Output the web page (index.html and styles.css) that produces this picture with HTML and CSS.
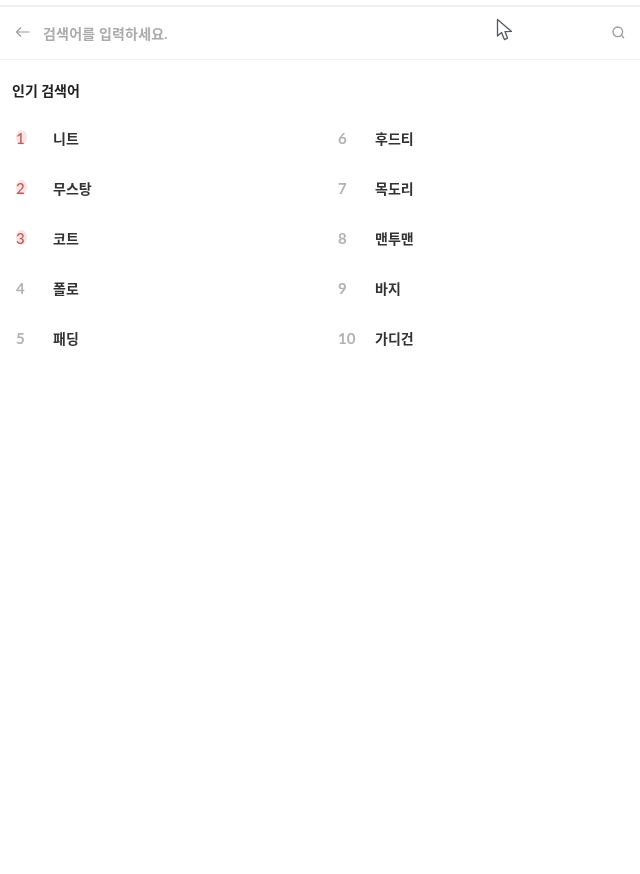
FILE: index.html
```html
<!DOCTYPE html>
<html lang="ko">
<head>
<meta charset="utf-8">
<title>검색</title>
<link rel="stylesheet" href="styles.css">
</head>
<body>
<div class="page">
  <header class="search-bar">
    <svg class="icon-back" width="16" height="12" viewBox="0 0 16 12" fill="none" stroke="#9a9a9a" stroke-width="1.2"><path d="M14.5 6H1.5M6 1.5L1.5 6L6 10.5"/></svg>
    <span class="placeholder">검색어를 입력하세요.</span>
    <svg class="icon-search" width="15" height="15" viewBox="0 0 15 15" fill="none" stroke="#9a9a9a" stroke-width="1.3"><circle cx="6.8" cy="6.8" r="4.8"/><path d="M10.3 10.3L13 13"/></svg>
  </header>
  <svg class="cursor" width="18" height="24" viewBox="0 0 18 24" fill="#fff" stroke="#55585e" stroke-width="1.3" stroke-linejoin="round"><path d="M1.5 1.5V18L5.6 14.6L8.4 21.6L11.6 20.2L9 13.6L15.5 13.4Z"/></svg>
  <h2 class="title">인기 검색어</h2>
  <ol class="ranks">
    <li class="rank top"><span class="num">1</span><span class="word">니트</span></li>
    <li class="rank"><span class="num">6</span><span class="word">후드티</span></li>
    <li class="rank top"><span class="num">2</span><span class="word">무스탕</span></li>
    <li class="rank"><span class="num">7</span><span class="word">목도리</span></li>
    <li class="rank top"><span class="num">3</span><span class="word">코트</span></li>
    <li class="rank"><span class="num">8</span><span class="word">맨투맨</span></li>
    <li class="rank"><span class="num">4</span><span class="word">폴로</span></li>
    <li class="rank"><span class="num">9</span><span class="word">바지</span></li>
    <li class="rank"><span class="num">5</span><span class="word">패딩</span></li>
    <li class="rank"><span class="num">10</span><span class="word">가디건</span></li>
  </ol>
</div>
</body>
</html>
```
FILE: styles.css
```css
* { box-sizing: border-box; }
html, body { margin: 0; padding: 0; background: #fff; }
body { font-family: Lato, "Noto Sans CJK KR", sans-serif; }
.page {
  position: relative;
  width: 640px;
  height: 874px;
  padding-top: 5px;
  overflow: hidden;
  filter: blur(0.5px);
}
.search-bar {
  display: flex;
  align-items: center;
  height: 55px;
  padding: 0 14px 0 15px;
  border-top: 2px solid #f0f0f0;
  border-bottom: 1px solid #f2f2f2;
}
.icon-back { flex: none; margin-right: 12px; margin-top: -2px; }
.placeholder { flex: 1; font-size: 14px; font-weight: 700; color: #ababab; letter-spacing: 0.2px; }
.icon-search { flex: none; margin-top: -1px; }
.cursor { position: absolute; left: 496px; top: 18px; }
.title {
  margin: 0;
  padding: 21px 12px 0;
  font-size: 14px;
  line-height: 20px;
  font-weight: 700;
  color: #222;
}
.ranks {
  display: grid;
  grid-template-columns: 322px 302px;
  grid-auto-rows: 50px;
  margin: 12px 0 0;
  padding: 0 0 0 16px;
  list-style: none;
}
.rank { display: flex; align-items: center; }
.num {
  position: relative;
  width: 37px;
  font-size: 15px;
  font-weight: 700;
  color: #b2b2b2;
}
.top .num { color: #b5605b; font-weight: 500; }
.top .num::before {
  content: "";
  position: absolute;
  left: 0;
  top: 1px;
  width: 11px;
  height: 15px;
  border-radius: 50%;
  background: #fbe3e3;
  z-index: -1;
}
.word { font-size: 14px; font-weight: 700; color: #333; }
```
